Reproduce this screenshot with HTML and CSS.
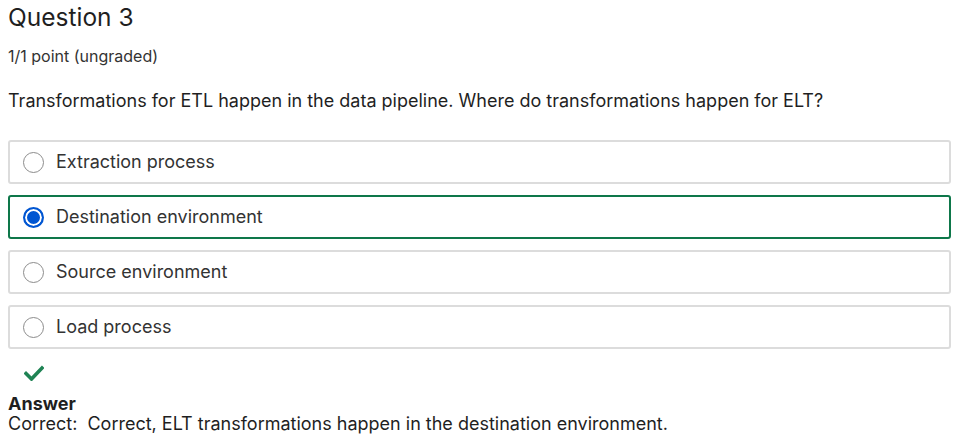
FILE: index.html
```html
<!DOCTYPE html>
<html>
<head>
<meta charset="utf-8">
<link rel="stylesheet" href="styles.css">
</head>
<body>
<div class="page">
  <h2 class="title">Question 3</h2>
  <div class="points">1/1 point (ungraded)</div>
  <p class="prompt">Transformations for ETL happen in the data pipeline. Where do transformations happen for ELT?</p>
  <div class="options">
    <label class="option"><span class="radio"></span><span class="label">Extraction process</span></label>
    <label class="option selected"><span class="radio on"></span><span class="label">Destination environment</span></label>
    <label class="option"><span class="radio"></span><span class="label">Source environment</span></label>
    <label class="option"><span class="radio"></span><span class="label">Load process</span></label>
  </div>
  <div class="check">
    <svg width="20" height="16" viewBox="0 0 20 16"><path d="M2 8.5 L7.5 14 L18 3" fill="none" stroke="#1f8354" stroke-width="3.6" stroke-linecap="square" stroke-linejoin="miter"/></svg>
  </div>
  <div class="answer-title">Answer</div>
  <div class="answer-text">Correct:&nbsp; Correct, ELT transformations happen in the destination environment.</div>
</div>
</body>
</html>
```

FILE: styles.css
```css
* { box-sizing: border-box; }
html, body { margin: 0; padding: 0; background: #fff; }
body { font-family: Inter, "Noto Sans", sans-serif; color: #1f1f1f; }
.page { padding: 0 7px 0 8px; }
.title { margin: 0; font-size: 24.5px; font-weight: 400; line-height: 34px; color: #1f1f1f; }
.points { margin-top: 12px; font-size: 16px; line-height: 20px; color: #333; }
.prompt { margin: 23px 0 0; font-size: 18px; line-height: 24px; color: #1f1f1f; }
.options { margin-top: 27px; display: flex; flex-direction: column; gap: 11px; }
.option { display: flex; align-items: center; height: 44px; border: 2px solid #dcdcdc; border-radius: 3px; padding-left: 13px; font-size: 18px; color: #333; }
.option.selected { border-color: #0e774a; }
.radio { width: 21px; height: 21px; border-radius: 50%; border: 1px solid #8c8c8c; margin-right: 12px; flex: none; background: #fff; }
.radio.on { border: 2px solid #0056d2; box-shadow: inset 0 0 0 2px #fff; background: #0056d2; }
.label { line-height: 22px; }
.check { margin-top: 14px; padding-left: 16px; height: 20px; display: flex; align-items: center; }
.answer-title { margin-top: 11px; font-size: 18px; font-weight: 700; line-height: 20px; color: #1f1f1f; }
.answer-text { font-size: 18px; line-height: 20px; color: #1f1f1f; }
```
